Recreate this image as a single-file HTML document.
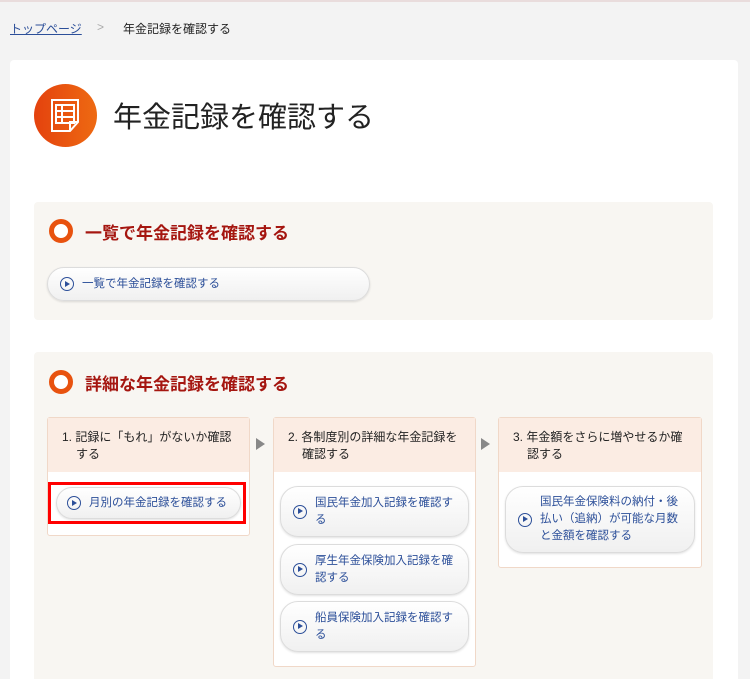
<!DOCTYPE html>
<html><head><meta charset="utf-8"><style>
*{margin:0;padding:0;box-sizing:border-box}
html{width:750px;height:679px;overflow:hidden}
body{width:750px;height:679px;overflow:hidden;background:#f3f3f3;font-family:"Liberation Sans","Noto Sans CJK JP",sans-serif;position:relative;color:#222}
.a{position:absolute}
.sec{background:#f8f6f2;border-radius:4px}
.ring{width:24px;height:24px;border-radius:50%;border:5px solid #e8520f;background:#fff}
.h2{font-size:17px;font-weight:bold;color:#a51610}
.btn{position:absolute;background:linear-gradient(#fff,#f0f0f0);border:1px solid #dcdcdc;border-radius:18px;box-shadow:0 1px 2px rgba(0,0,0,.12);color:#2c4f99;font-size:11.5px;line-height:17px;display:flex;align-items:center}
.btn i{flex:none;width:14px;height:14px;border:1.5px solid #2c4f99;border-radius:50%;position:relative;margin-right:8px}
.btn i:after{content:"";position:absolute;left:4px;top:2.5px;border-left:5px solid #2c4f99;border-top:3px solid transparent;border-bottom:3px solid transparent}
.col{position:absolute;background:#fff;border:1px solid #f0d8c8;border-radius:3px}
.col .hd{background:#fbece3;font-size:12px;line-height:17px;padding:11px 10px 0 28px;text-indent:-14px;height:54px}
.arr{position:absolute;border-left:9px solid #888;border-top:6px solid transparent;border-bottom:6px solid transparent}
</style></head><body>
<div class="a" style="left:0;top:0;width:750px;height:2px;background:#e9dcdc"></div>
<div class="a" style="left:10px;top:20px;font-size:12px;color:#2c4f99;text-decoration:underline">トップページ</div>
<div class="a" style="left:97px;top:20px;font-size:12px;color:#aaa">&gt;</div>
<div class="a" style="left:123px;top:20px;font-size:12px">年金記録を確認する</div>
<div class="a" style="left:10px;top:60px;width:728px;height:619px;background:#fff;border-radius:4px 4px 0 0"></div>
<div class="a" style="left:34px;top:84px;width:63px;height:63px;border-radius:50%;background:linear-gradient(90deg,#e4420e,#ee6a12)">
<svg width="63" height="63" viewBox="0 0 63 63"><g fill="none" stroke="#fff" stroke-width="2"><path d="M18 16h26v22l-8 9H18z"/><path d="M36 47v-9h8"/><path d="M22 21h18v18H22zM22 27h18M22 33h18M28 21v18"/></g></svg></div>
<div class="a" style="left:113px;top:94px;font-size:29px;color:#222">年金記録を確認する</div>
<div class="a sec" style="left:34px;top:202px;width:679px;height:118px"></div>
<div class="a ring" style="left:49px;top:219px"></div>
<div class="a h2" style="left:85px;top:219px">一覧で年金記録を確認する</div>
<div class="btn" style="left:47px;top:267px;width:323px;height:34px;padding-left:12px"><i></i>一覧で年金記録を確認する</div>
<div class="a sec" style="left:34px;top:352px;width:679px;height:340px"></div>
<div class="a ring" style="left:49px;top:370px"></div>
<div class="a h2" style="left:85px;top:370px">詳細な年金記録を確認する</div>
<div class="col" style="left:47px;top:417px;width:203px;height:119px"><div class="hd">1. 記録に「もれ」がないか確認する</div></div>
<div class="a" style="left:48px;top:482px;width:198px;height:42px;border:3px solid #f00"></div>
<div class="btn" style="left:56px;top:487px;width:185px;height:32px;padding-left:10px"><i></i>月別の年金記録を確認する</div>
<div class="arr" style="left:256px;top:438px"></div>
<div class="col" style="left:273px;top:417px;width:203px;height:250px"><div class="hd">2. 各制度別の詳細な年金記録を確認する</div></div>
<div class="btn" style="left:280px;top:486px;width:189px;height:51px;padding:0 10px 0 12px"><i></i>国民年金加入記録を確認する</div>
<div class="btn" style="left:280px;top:544px;width:189px;height:51px;padding:0 10px 0 12px"><i></i>厚生年金保険加入記録を確認する</div>
<div class="btn" style="left:280px;top:601px;width:189px;height:51px;padding:0 10px 0 12px"><i></i>船員保険加入記録を確認する</div>
<div class="arr" style="left:481px;top:438px"></div>
<div class="col" style="left:498px;top:417px;width:204px;height:151px"><div class="hd">3. 年金額をさらに増やせるか確認する</div></div>
<div class="btn" style="left:505px;top:486px;width:190px;height:67px;padding:0 10px 0 12px"><i></i>国民年金保険料の納付・後払い（追納）が可能な月数と金額を確認する</div>
</body></html>
